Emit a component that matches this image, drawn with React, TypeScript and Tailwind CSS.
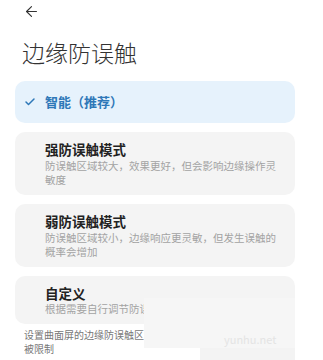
import { ArrowLeft, Check } from "lucide-react";

const font = { fontFamily: '"Noto Sans CJK SC", "Noto Sans", sans-serif' };

const modes = [
  {
    title: "强防误触模式",
    desc: ["防误触区域较大，效果更好，但会影响边缘操作灵", "敏度"],
  },
  {
    title: "弱防误触模式",
    desc: ["防误触区域较小，边缘响应更灵敏，但发生误触的", "概率会增加"],
  },
];

function ModeCard({ title, desc }: { title: string; desc: string[] }) {
  return (
    <div className="rounded-[10px] bg-[#f4f4f4] pl-[30px] pr-3 pt-[8px] pb-[8px]">
      <div className="text-[13.5px] leading-[18px] font-bold text-[#222]">{title}</div>
      <div className="mt-[1px] text-[10.5px] leading-[14px] text-[#a3a3a3]">
        {desc.map((line) => (
          <div key={line} className="whitespace-nowrap">
            {line}
          </div>
        ))}
      </div>
    </div>
  );
}

export default function App() {
  return (
    <div className="relative h-[360px] w-[323px] overflow-hidden bg-white" style={font}>
      <div className="flex h-[22px] items-center pl-[23px]">
        <ArrowLeft size={17} strokeWidth={1.6} className="text-[#333]" />
      </div>
      <h1 className="mt-[17px] pl-[22px] text-[23px] leading-[26px] font-light text-[#333]">
        边缘防误触
      </h1>
      <div className="mt-[16px] flex w-[280px] flex-col gap-[9px] pl-[15px] box-content">
        <div className="flex h-[42px] items-center rounded-[10px] bg-[#e6f2fc] pl-[9px]">
          <Check size={12} strokeWidth={3} className="text-[#2e78b8]" />
          <span className="ml-[9px] text-[13px] font-bold text-[#2e78b8]">智能（推荐）</span>
        </div>
        {modes.map((m) => (
          <ModeCard key={m.title} title={m.title} desc={m.desc} />
        ))}
        <div className="h-[48px] rounded-[10px] bg-[#f4f4f4] pl-[30px] pt-[8px]">
          <div className="w-fit text-[13.5px] leading-[18px] font-bold text-[#222]">自定义</div>
          <div className="w-[99px] overflow-hidden text-[10.5px] leading-[14px] text-[#a3a3a3] whitespace-nowrap">
            根据需要自行调节防误触区域
          </div>
        </div>
      </div>
      <div className="mt-[4px] w-[120px] overflow-hidden ml-[24px] text-[10px] leading-[14px] text-[#777]">
        <div className="whitespace-nowrap">设置曲面屏的边缘防误触区域，部分应用的边缘操作</div>
        <div>被限制</div>
      </div>
      <div className="absolute left-[144px] top-[298px] h-[50px] w-[151px] bg-[#f6f6f6]">
        <span className="absolute left-[80px] top-[33px] text-[11px] text-[#e4e4e4]">yunhu.net</span>
      </div>
      <div className="absolute left-[200px] top-[348px] h-[12px] w-[95px] bg-[#f3f3f3]" />
    </div>
  );
}
